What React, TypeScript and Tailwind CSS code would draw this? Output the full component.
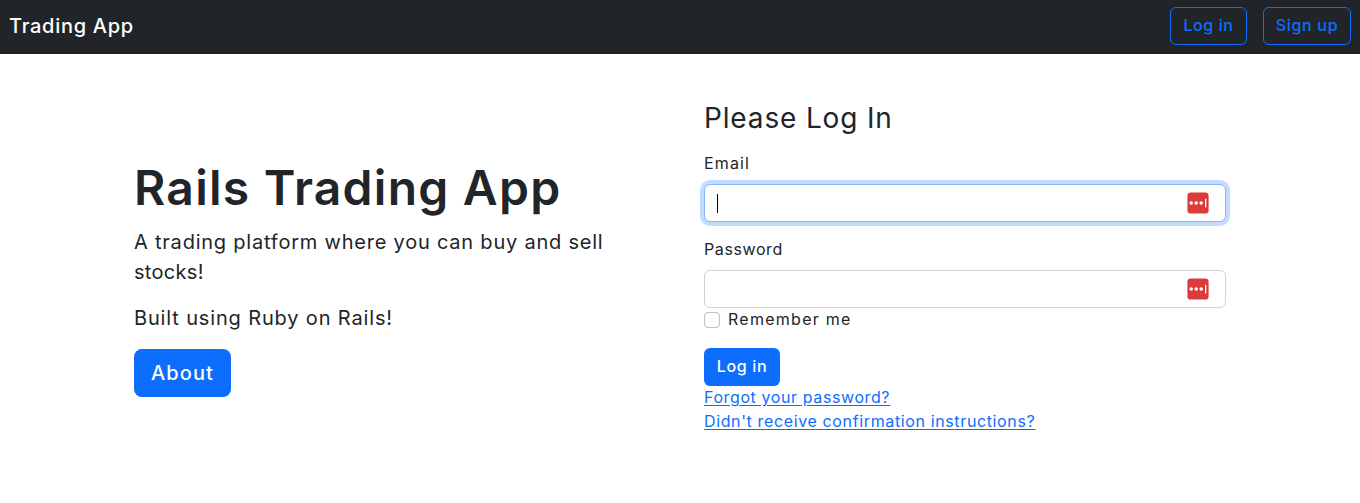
function PasswordManagerIcon() {
  return (
    <svg width="22" height="22" viewBox="0 0 22 22" className="mr-4 shrink-0" aria-hidden="true">
      <rect x="0.4" y="0.4" width="21.2" height="21.2" rx="3.4" fill="#db3b3a" />
      <circle cx="4.2" cy="11" r="1.75" fill="#fff" />
      <circle cx="9.2" cy="11" r="1.75" fill="#fff" />
      <circle cx="14.2" cy="11" r="1.75" fill="#fff" />
      <rect x="18" y="6.8" width="1.3" height="8.6" rx="0.5" fill="#fff" />
    </svg>
  );
}

function NavBar() {
  return (
    <nav className="flex h-[54px] items-center justify-between bg-[#212529] pr-[9px] pl-[9px]">
      <a className="pb-[2px] text-xl leading-[30px] font-medium tracking-[0.72px] text-white">Trading App</a>
      <div className="-mt-[2px] flex gap-4 font-medium text-[#0d6efd]">
        <button className="flex h-[38px] w-[77px] items-center justify-center rounded-md border border-[#0d6efd] pb-[2px] tracking-[0.6px]">
          Log in
        </button>
        <button className="flex h-[38px] w-[88px] items-center justify-center rounded-md border border-[#0d6efd] pb-[2px] tracking-[0.7px]">
          Sign up
        </button>
      </div>
    </nav>
  );
}

function Intro() {
  return (
    <section className="w-[522px] pt-[105px]">
      <h1 className="mb-2.5 text-5xl leading-[58px] font-semibold tracking-[1.25px]">Rails Trading App</h1>
      <p className="mb-4 text-xl leading-[30px] tracking-[0.78px]">
        A trading platform where you can buy and sell
        <br />
        <span className="tracking-[0.3px]">stocks!</span>
      </p>
      <p className="mb-4 text-xl leading-[30px] tracking-[0.85px]">Built using Ruby on Rails!</p>
      <button className="flex h-12 w-[97px] items-center justify-center rounded-lg bg-[#0d6efd] text-xl font-medium tracking-[1.1px] text-white">
        About
      </button>
    </section>
  );
}

function LoginForm() {
  return (
    <section className="w-[522px] pt-[47px]">
      <h2 className="mb-4 text-[28px] leading-[34px] tracking-[0.85px]">Please Log In</h2>
      <div className="mb-[15px]">
        <label className="mb-[9px] block leading-6 tracking-[1.15px]">Email</label>
        <div className="flex h-[38px] items-center justify-between rounded-md border border-[#86b7fe] bg-white pl-3 shadow-[0_0_0_4px_#c2dbff]">
          <span className="h-[19px] w-px bg-black" />
          <PasswordManagerIcon />
        </div>
      </div>
      <label className="mb-[9px] block leading-6 tracking-[0.6px]">Password</label>
      <div className="flex h-[38px] items-center justify-end rounded-md border border-[#ced4da] bg-white">
        <PasswordManagerIcon />
      </div>
      <div className="mb-4 flex h-6 items-center gap-2">
        <span className="size-4 rounded-[4px] border border-[#bfbfbf]" />
        <label className="pb-[2px] leading-6 tracking-[1.27px]">Remember me</label>
      </div>
      <button className="flex h-[38px] w-[76px] items-center justify-center rounded-md bg-[#0d6efd] pb-[2px] font-medium tracking-[0.65px] text-white">
        Log in
      </button>
      <div className="-mt-px flex flex-col items-start text-[#0d6efd] underline underline-offset-2">
        <a className="leading-6 tracking-[0.6px]">Forgot your password?</a>
        <a className="leading-6 tracking-[0.63px]">Didn't receive confirmation instructions?</a>
      </div>
    </section>
  );
}

export default function App() {
  return (
    <div className="h-[503px] overflow-hidden bg-white font-['Inter',sans-serif] text-base whitespace-nowrap text-[#212529]">
      <NavBar />
      <main className="flex items-start gap-12 pl-[134px]">
        <Intro />
        <LoginForm />
      </main>
    </div>
  );
}
